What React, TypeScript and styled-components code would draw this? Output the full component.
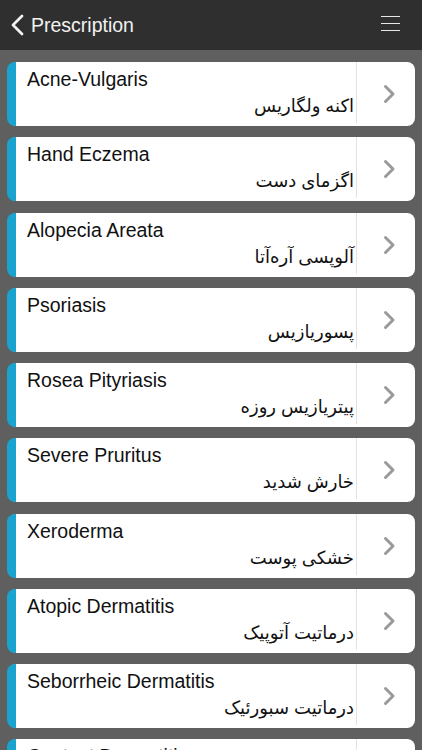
import styled, { createGlobalStyle } from "styled-components";

interface Condition {
  readonly en: string;
  readonly fa: string;
}

const conditions: Array<Condition> = [
  { en: "Acne-Vulgaris", fa: "اکنه ولگاریس" },
  { en: "Hand Eczema", fa: "اگزمای دست" },
  { en: "Alopecia Areata", fa: "آلوپسی آره‌آتا" },
  { en: "Psoriasis", fa: "پسوریازیس" },
  { en: "Rosea Pityriasis", fa: "پیتریازیس روزه" },
  { en: "Severe Pruritus", fa: "خارش شدید" },
  { en: "Xeroderma", fa: "خشکی پوست" },
  { en: "Atopic Dermatitis", fa: "درماتیت آتوپیک" },
  { en: "Seborrheic Dermatitis", fa: "درماتیت سبورئیک" },
  { en: "Contact Dermatitis", fa: "درماتیت تماسی" },
];

const GlobalStyle = createGlobalStyle`
  html, body {
    margin: 0;
    padding: 0;
    background: #5f5f5f;
    font-family: "Liberation Sans", "DejaVu Sans", Arial, sans-serif;
  }
`;

const BackIcon = () => (
  <svg width="16" height="22" viewBox="0 0 16 22">
    <path d="M13 2 L4 11 L13 20" fill="none" stroke="#f2f2f2" strokeWidth="2.8" strokeLinecap="round" strokeLinejoin="round" />
  </svg>
);

const ChevronIcon = () => (
  <svg width="13" height="20" viewBox="0 0 13 20">
    <path d="M2.5 2.5 L10 10 L2.5 17.5" fill="none" stroke="#9a9a9a" strokeWidth="3" strokeLinecap="round" strokeLinejoin="round" />
  </svg>
);

export default function App() {
  return (
    <>
      <GlobalStyle />
      <Screen>
        <Header>
          <BackButton>
            <BackIcon />
            <Title>Prescription</Title>
          </BackButton>
          <MenuButton aria-label="menu">
            <MenuLine />
            <MenuLine />
            <MenuLine />
          </MenuButton>
        </Header>
        <List>
          {conditions.map(({ en, fa }) => (
            <Card key={en}>
              <CardBody>
                <EnglishName>{en}</EnglishName>
                <PersianName dir="rtl">{fa}</PersianName>
              </CardBody>
              <ArrowCell>
                <ChevronIcon />
              </ArrowCell>
            </Card>
          ))}
        </List>
      </Screen>
    </>
  );
}

const Screen = styled.div`
  height: 750px;
  overflow: hidden;
  background: #5f5f5f;
`;

const Header = styled.header`
  height: 50px;
  background: #2f2f2f;
  display: flex;
  align-items: center;
  justify-content: space-between;
  padding: 0 22px 0 9px;
  box-sizing: border-box;
`;

const BackButton = styled.div`
  display: flex;
  align-items: center;
  gap: 6px;
`;

const Title = styled.span`
  color: #f2f2f2;
  font-size: 19.5px;
`;

const MenuButton = styled.div`
  display: flex;
  flex-direction: column;
  gap: 5.5px;
  width: 19px;
  margin-top: -3px;
`;

const MenuLine = styled.span`
  display: block;
  height: 1.5px;
  background: #e6e6e6;
`;

const List = styled.div`
  display: flex;
  flex-direction: column;
  gap: 11.25px;
  padding: 12px 7px;
`;

const Card = styled.div`
  display: flex;
  height: 64px;
  flex-shrink: 0;
  background: #ffffff;
  border-radius: 8px;
  border-left: 9px solid #1aa3cf;
  overflow: hidden;
`;

const CardBody = styled.div`
  flex: 1;
  display: flex;
  flex-direction: column;
  padding: 6px 2px 0 11px;
  border-right: 1px solid #e2e2e2;
  margin-bottom: 3px;
`;

const EnglishName = styled.div`
  font-size: 19.5px;
  line-height: 23px;
  color: #111;
`;

const PersianName = styled.div`
  font-size: 18px;
  line-height: 26px;
  color: #111;
  text-align: right;
  margin-top: 2px;
`;

const ArrowCell = styled.div`
  width: 58px;
  display: flex;
  align-items: center;
  justify-content: center;
  padding-left: 6px;
  box-sizing: border-box;
`;
